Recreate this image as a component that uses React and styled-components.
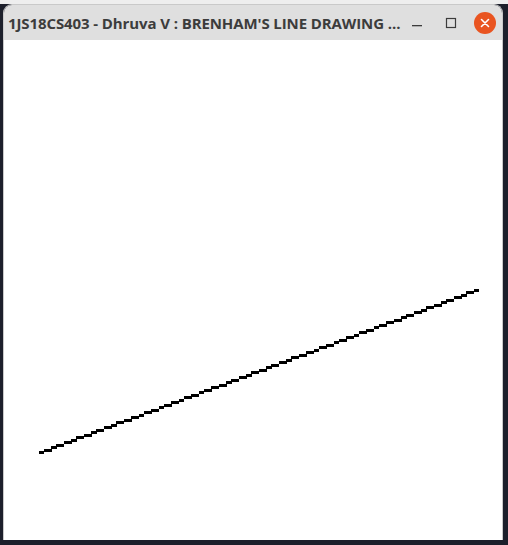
import React from "react";
import styled, { createGlobalStyle } from "styled-components";

const GlobalStyle = createGlobalStyle`
  html, body {
    margin: 0;
    padding: 0;
    background: #1c1f2b;
  }
  body {
    width: 508px;
    height: 545px;
    overflow: hidden;
  }
`;

const Desktop = styled.div`
  width: 508px;
  height: 545px;
  box-sizing: border-box;
  padding: 4px 5px 5px 3px;
  background: linear-gradient(to bottom, #eeeeee 0, #eeeeee 4px, #1c1f2b 4px);
`;

const Window = styled.div`
  width: 500px;
  display: flex;
  flex-direction: column;
  border-radius: 9px 9px 0 0;
  overflow: hidden;
  border: 1px solid #c9c9c9;
  border-bottom: none;
  box-sizing: border-box;
`;

const TitleBar = styled.div`
  height: 35px;
  background: #dfdfdf;
  display: flex;
  align-items: center;
  padding: 0 6px 0 4px;
  font-family: "Open Sans", "DejaVu Sans", sans-serif;
  font-weight: 700;
  font-size: 15px;
  color: #3c3c3c;
`;

const Title = styled.div`
  flex: 1;
  min-width: 0;
  white-space: nowrap;
  overflow: hidden;
  letter-spacing: -0.1px;
`;

const Controls = styled.div`
  flex-shrink: 0;
  display: flex;
  align-items: center;
  gap: 12px;
`;

const ControlButton = styled.div`
  width: 22px;
  height: 22px;
  border-radius: 50%;
  display: flex;
  align-items: center;
  justify-content: center;
  background: ${({ $close }) => ($close ? "#e95420" : "transparent")};
`;

const Canvas = styled.svg`
  display: block;
  background: #ffffff;
`;

const SCALE = 2.5;
const H = 500;

function bresenham(x0, y0, x1, y1) {
  const pts = [];
  const dx = x1 - x0;
  const dy = y1 - y0;
  let p = 2 * dy - dx;
  let y = y0;
  for (let x = x0; x <= x1; x++) {
    pts.push([x, y]);
    if (p >= 0) {
      y++;
      p += 2 * dy - 2 * dx;
    } else {
      p += 2 * dy;
    }
  }
  return pts;
}

const points = bresenham(14, 35, 189, 100);

export default function App() {
  return (
    <>
      <GlobalStyle />
      <Desktop>
        <Window>
          <TitleBar>
            <Title>1JS18CS403 - Dhruva V : BRENHAM'S LINE DRAWING ...</Title>
            <Controls>
              <ControlButton>
                <svg width="12" height="12" viewBox="0 0 12 12">
                  <rect x="1" y="8" width="10" height="1.3" fill="#3c3c3c" />
                </svg>
              </ControlButton>
              <ControlButton>
                <svg width="12" height="12" viewBox="0 0 12 12">
                  <rect x="1.5" y="1.5" width="9" height="9" fill="none" stroke="#3c3c3c" strokeWidth="1.2" />
                </svg>
              </ControlButton>
              <ControlButton $close>
                <svg width="10" height="10" viewBox="0 0 10 10">
                  <path d="M1.5 1.5 L8.5 8.5 M8.5 1.5 L1.5 8.5" stroke="#fff" strokeWidth="1.6" strokeLinecap="round" />
                </svg>
              </ControlButton>
            </Controls>
          </TitleBar>
          <Canvas width="498" height="500" viewBox="0 0 498 500" shapeRendering="crispEdges">
            {points.map(([x, y], i) => (
              <rect
                key={i}
                x={x * SCALE - 0.5}
                y={H - y * SCALE - 1.5}
                width="3"
                height="3"
                fill="#000"
              />
            ))}
          </Canvas>
        </Window>
      </Desktop>
    </>
  );
}
